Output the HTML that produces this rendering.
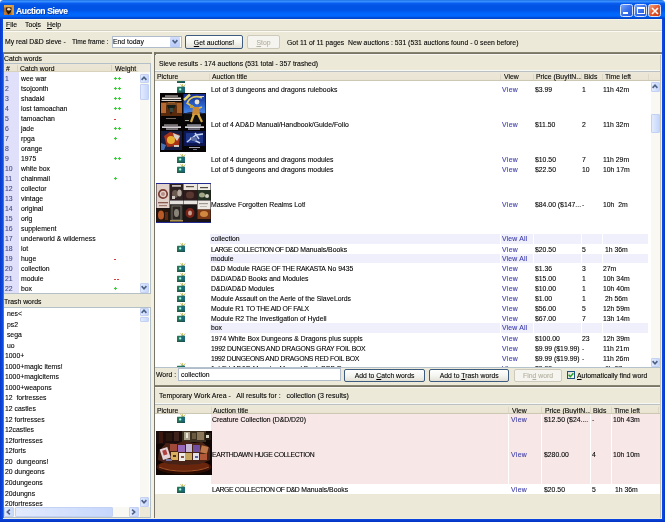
<!DOCTYPE html><html><head><meta charset="utf-8"><style>
*{box-sizing:border-box;margin:0;padding:0}
html,body{width:665px;height:522px;overflow:hidden;background:#fafafa}
body{font-family:"Liberation Sans",sans-serif;font-size:6.85px;line-height:10px;color:#000;position:relative}
.a{position:absolute}
.t{position:absolute;white-space:pre;line-height:10px;will-change:transform;-webkit-text-stroke:0.1px currentColor}
.tb{position:absolute;width:13px;height:13px;top:4px;border:1px solid #d8e4fa;border-radius:2.5px;background:linear-gradient(135deg,#77a7fb,#3a70ec 50%,#2157dc)}
.tbx{background:linear-gradient(135deg,#f3a583,#e2582f 50%,#c73f16)}
.sbb{position:absolute;border:1px solid #c3d1f5;border-radius:1px;background:linear-gradient(90deg,#e3ebfd,#c6d6fc)}
.vw{color:#3b3ba8}
</style></head><body><div class="a" style="left:0px;top:5px;width:665px;height:517px;background:#0b3fd4"></div>
<div class="a" style="left:0px;top:5px;width:3px;height:517px;background:linear-gradient(90deg,#0a37c8,#0b4fe6)"></div>
<div class="a" style="left:662px;top:5px;width:3px;height:517px;background:linear-gradient(90deg,#0b4fe6,#0a37c8)"></div>
<div class="a" style="left:0px;top:0px;width:665px;height:19px;background:linear-gradient(#1c6ee2 0px,#3a92ff 1.3px,#2a84fa 2px,#0a5cf0 3.5px,#0052e2 6px,#0054e6 10px,#0064fa 13px,#0068ff 16px,#0050dc 17.5px,#0040c8 19px);border-radius:3.5px 3.5px 0 0"></div>
<svg class="a" style="left:4px;top:5px" width="10" height="10" viewBox="0 0 10 10"><defs><filter id="bi"><feGaussianBlur stdDeviation="0.45"/></filter></defs><rect width="10" height="10" fill="#a86a2a"/><g filter="url(#bi)"><rect x="0" y="0" width="10" height="2.5" fill="#e0a850"/><rect x="7.5" y="0" width="2.5" height="10" fill="#d89840"/><path d="M2 2.5L7.5 2.5L7 7L4.5 9.5L2.5 7Z" fill="#24140a"/><ellipse cx="4.8" cy="4.2" rx="1.8" ry="1.3" fill="#f0e0c0"/><rect x="0" y="7" width="2.5" height="3" fill="#c07830"/></g></svg>
<div class="t" style="left:16px;top:5.60px;font-size:8.6px;letter-spacing:-0.4px;font-weight:bold;color:#fff;text-shadow:0.7px 0.7px 0 #0a3aa8">Auction Sieve</div>
<div class="tb" style="left:620px"><div class="a" style="left:2px;top:6.5px;width:4.5px;height:2px;background:#fff"></div></div>
<div class="tb" style="left:634px"><div class="a" style="left:2px;top:2px;width:8px;height:7px;border:1px solid #fff;border-top-width:2px"></div></div>
<div class="tb tbx" style="left:648px"><svg class="a" style="left:2px;top:2px" width="8" height="8"><path d="M1 1L7 7M7 1L1 7" stroke="#fff" stroke-width="1.6"/></svg></div>
<div class="a" style="left:3px;top:19px;width:659px;height:499px;background:#ece9d8"></div>
<div class="a" style="left:3px;top:19px;width:659px;height:1px;background:#f8f5e6"></div>
<div class="t" style="left:6px;top:19.60px;"><u>F</u>ile</div>
<div class="t" style="left:24.5px;top:19.60px;">Too<u>l</u>s</div>
<div class="t" style="left:47px;top:19.60px;"><u>H</u>elp</div>
<div class="a" style="left:3px;top:30px;width:659px;height:1px;background:#d3cfbf"></div>
<div class="a" style="left:3px;top:31px;width:659px;height:1px;background:#fbfaf5"></div>
<div class="t" style="left:5.4px;top:37.30px;">My real D&amp;D sieve -</div>
<div class="t" style="left:72px;top:37.30px;font-size:6.55px">Time frame :</div>
<div class="a" style="left:111.5px;top:36px;width:70px;height:12px;background:#fff;border:1px solid #b0bccb"></div>
<div class="t" style="left:113px;top:37.30px;">End today</div>
<div class="a" style="left:170px;top:37px;width:10px;height:10px;background:linear-gradient(#d2defc,#b8cbf8);border-radius:1px"></div>
<svg class="a" style="left:172px;top:39px" width="6" height="5"><path d="M0.6 1.1L3 3.7L5.4 1.1" stroke="#4d6185" stroke-width="1.6" fill="none"/></svg>
<div class="a" style="left:185px;top:35px;width:58px;height:14px;border:1px solid #3d5c80;border-radius:2px;background:linear-gradient(#fff,#f4f4f0 55%,#e3e0d6)"></div>
<div class="t" style="left:185px;top:38.00px;width:58px;text-align:center"><u>G</u>et auctions!</div>
<div class="a" style="left:247px;top:35px;width:33px;height:14px;border:1px solid #cdcabb;border-radius:2px;background:#f5f4ee"></div>
<div class="t" style="left:247px;top:38.00px;width:33px;text-align:center;color:#b3b0a0"><u>S</u>top</div>
<div class="t" style="left:287px;top:38.00px;">Got 11 of 11 pages&nbsp; New auctions : 531 (531 auctions found - 0 seen before)</div>
<div class="a" style="left:3px;top:52px;width:149px;height:2px;background:linear-gradient(#8c8978,#736f60)"></div>
<div class="a" style="left:154px;top:52px;width:508px;height:2px;background:linear-gradient(#8c8978,#736f60)"></div>
<div class="a" style="left:3px;top:54px;width:148px;height:1px;background:#f7f6f0"></div>
<div class="a" style="left:156px;top:54px;width:505px;height:1px;background:#f7f6f0"></div>
<div class="t" style="left:4px;top:53.60px;">Catch words</div>
<div class="a" style="left:3px;top:63px;width:148px;height:231px;background:#fff;border:1px solid #b4c0c8"></div>
<div class="a" style="left:4px;top:64px;width:146px;height:8px;background:#ece9dc"></div>
<div class="a" style="left:4px;top:64px;width:134px;height:8px;background:linear-gradient(#ebe6d6,#e9e3d0);border-bottom:1px solid #d8d2bd"></div>
<div class="t" style="left:5.7px;top:64.10px;">#</div>
<div class="t" style="left:20px;top:64.10px;">Catch word</div>
<div class="t" style="left:115px;top:64.10px;">Weight</div>
<div class="a" style="left:17px;top:65px;width:1px;height:6px;background:#d6d0bd"></div>
<div class="a" style="left:111px;top:65px;width:1px;height:6px;background:#d6d0bd"></div>
<div class="a" style="left:4px;top:72px;width:15px;height:221px;background:#e0e0fb"></div>
<div class="t" style="left:5px;top:74.00px;color:#404a88">1</div>
<div class="t" style="left:21.3px;top:74.00px;">wee war</div>
<svg class="a" style="left:113.5px;top:77.2px" width="3" height="3"><path d="M0 1.5H3M1.5 0V3" stroke="#3cd03c" stroke-width="1.2"/></svg>
<svg class="a" style="left:117.5px;top:77.2px" width="3" height="3"><path d="M0 1.5H3M1.5 0V3" stroke="#3cd03c" stroke-width="1.2"/></svg>
<div class="t" style="left:5px;top:84.00px;color:#404a88">2</div>
<div class="t" style="left:21.3px;top:84.00px;">tsojconth</div>
<svg class="a" style="left:113.5px;top:87.2px" width="3" height="3"><path d="M0 1.5H3M1.5 0V3" stroke="#3cd03c" stroke-width="1.2"/></svg>
<svg class="a" style="left:117.5px;top:87.2px" width="3" height="3"><path d="M0 1.5H3M1.5 0V3" stroke="#3cd03c" stroke-width="1.2"/></svg>
<div class="t" style="left:5px;top:94.00px;color:#404a88">3</div>
<div class="t" style="left:21.3px;top:94.00px;">shadaki</div>
<svg class="a" style="left:113.5px;top:97.2px" width="3" height="3"><path d="M0 1.5H3M1.5 0V3" stroke="#3cd03c" stroke-width="1.2"/></svg>
<svg class="a" style="left:117.5px;top:97.2px" width="3" height="3"><path d="M0 1.5H3M1.5 0V3" stroke="#3cd03c" stroke-width="1.2"/></svg>
<div class="t" style="left:5px;top:104.00px;color:#404a88">4</div>
<div class="t" style="left:21.3px;top:104.00px;">lost tamoachan</div>
<svg class="a" style="left:113.5px;top:107.2px" width="3" height="3"><path d="M0 1.5H3M1.5 0V3" stroke="#3cd03c" stroke-width="1.2"/></svg>
<svg class="a" style="left:117.5px;top:107.2px" width="3" height="3"><path d="M0 1.5H3M1.5 0V3" stroke="#3cd03c" stroke-width="1.2"/></svg>
<div class="t" style="left:5px;top:114.00px;color:#404a88">5</div>
<div class="t" style="left:21.3px;top:114.00px;">tamoachan</div>
<div class="a" style="left:113.8px;top:118.60000000000001px;width:2.4px;height:1px;background:#d83a3a"></div>
<div class="t" style="left:5px;top:124.00px;color:#404a88">6</div>
<div class="t" style="left:21.3px;top:124.00px;">jade</div>
<svg class="a" style="left:113.5px;top:127.2px" width="3" height="3"><path d="M0 1.5H3M1.5 0V3" stroke="#3cd03c" stroke-width="1.2"/></svg>
<svg class="a" style="left:117.5px;top:127.2px" width="3" height="3"><path d="M0 1.5H3M1.5 0V3" stroke="#3cd03c" stroke-width="1.2"/></svg>
<div class="t" style="left:5px;top:134.00px;color:#404a88">7</div>
<div class="t" style="left:21.3px;top:134.00px;">rpga</div>
<svg class="a" style="left:113.5px;top:137.20000000000002px" width="3" height="3"><path d="M0 1.5H3M1.5 0V3" stroke="#3cd03c" stroke-width="1.2"/></svg>
<div class="t" style="left:5px;top:144.00px;color:#404a88">8</div>
<div class="t" style="left:21.3px;top:144.00px;">orange</div>
<div class="t" style="left:5px;top:154.00px;color:#404a88">9</div>
<div class="t" style="left:21.3px;top:154.00px;">1975</div>
<svg class="a" style="left:113.5px;top:157.20000000000002px" width="3" height="3"><path d="M0 1.5H3M1.5 0V3" stroke="#3cd03c" stroke-width="1.2"/></svg>
<svg class="a" style="left:117.5px;top:157.20000000000002px" width="3" height="3"><path d="M0 1.5H3M1.5 0V3" stroke="#3cd03c" stroke-width="1.2"/></svg>
<div class="t" style="left:5px;top:164.00px;color:#404a88">10</div>
<div class="t" style="left:21.3px;top:164.00px;">white box</div>
<div class="t" style="left:5px;top:174.00px;color:#404a88">11</div>
<div class="t" style="left:21.3px;top:174.00px;">chainmail</div>
<svg class="a" style="left:113.5px;top:177.20000000000002px" width="3" height="3"><path d="M0 1.5H3M1.5 0V3" stroke="#3cd03c" stroke-width="1.2"/></svg>
<div class="t" style="left:5px;top:184.00px;color:#404a88">12</div>
<div class="t" style="left:21.3px;top:184.00px;">collector</div>
<div class="t" style="left:5px;top:194.00px;color:#404a88">13</div>
<div class="t" style="left:21.3px;top:194.00px;">vintage</div>
<div class="t" style="left:5px;top:204.00px;color:#404a88">14</div>
<div class="t" style="left:21.3px;top:204.00px;">original</div>
<div class="t" style="left:5px;top:214.00px;color:#404a88">15</div>
<div class="t" style="left:21.3px;top:214.00px;">orig</div>
<div class="t" style="left:5px;top:224.00px;color:#404a88">16</div>
<div class="t" style="left:21.3px;top:224.00px;">supplement</div>
<div class="t" style="left:5px;top:234.00px;color:#404a88">17</div>
<div class="t" style="left:21.3px;top:234.00px;">underworld &amp; wilderness</div>
<div class="t" style="left:5px;top:244.00px;color:#404a88">18</div>
<div class="t" style="left:21.3px;top:244.00px;">lot</div>
<div class="t" style="left:5px;top:254.00px;color:#404a88">19</div>
<div class="t" style="left:21.3px;top:254.00px;">huge</div>
<div class="a" style="left:113.8px;top:258.59999999999997px;width:2.4px;height:1px;background:#d83a3a"></div>
<div class="t" style="left:5px;top:264.00px;color:#404a88">20</div>
<div class="t" style="left:21.3px;top:264.00px;">collection</div>
<div class="t" style="left:5px;top:274.00px;color:#404a88">21</div>
<div class="t" style="left:21.3px;top:274.00px;">module</div>
<div class="a" style="left:113.8px;top:278.59999999999997px;width:2.4px;height:1px;background:#d83a3a"></div>
<div class="a" style="left:116.8px;top:278.59999999999997px;width:2.4px;height:1px;background:#d83a3a"></div>
<div class="t" style="left:5px;top:284.00px;color:#404a88">22</div>
<div class="t" style="left:21.3px;top:284.00px;">box</div>
<svg class="a" style="left:113.5px;top:287.2px" width="3" height="3"><path d="M0 1.5H3M1.5 0V3" stroke="#3cd03c" stroke-width="1.2"/></svg>
<div class="a" style="left:139.5px;top:72px;width:9px;height:221px;background:#f9f8f3"></div>
<div class="sbb" style="left:139.5px;top:73.5px;width:9px;height:9px"></div>
<svg class="a" style="left:140.5px;top:75.5px" width="6" height="5"><path d="M0.6 3.9L3 1.3L5.4 3.9" stroke="#4d6185" stroke-width="1.6" fill="none"/></svg>
<div class="sbb" style="left:139.5px;top:84px;width:9px;height:16px"></div>
<div class="sbb" style="left:139.5px;top:283px;width:9px;height:10px"></div>
<svg class="a" style="left:140.5px;top:285px" width="6" height="5"><path d="M0.6 1.1L3 3.7L5.4 1.1" stroke="#4d6185" stroke-width="1.6" fill="none"/></svg>
<div class="t" style="left:4px;top:297.40px;">Trash words</div>
<div class="a" style="left:3px;top:306.5px;width:148px;height:211.5px;background:#fff;border:1px solid #b4c0c8"></div>
<div class="a" style="left:4px;top:308px;width:135px;height:199px;overflow:hidden">
<div class="t" style="left:0.5px;top:1.00px"> nes&lt;</div>
<div class="t" style="left:0.5px;top:11.56px"> ps2</div>
<div class="t" style="left:0.5px;top:22.12px"> sega</div>
<div class="t" style="left:0.5px;top:32.68px"> uo</div>
<div class="t" style="left:0.5px;top:43.24px">1000+</div>
<div class="t" style="left:0.5px;top:53.80px">1000+magic items!</div>
<div class="t" style="left:0.5px;top:64.36px">1000+magicitems</div>
<div class="t" style="left:0.5px;top:74.92px">1000+weapons</div>
<div class="t" style="left:0.5px;top:85.48px">12&nbsp; fortresses</div>
<div class="t" style="left:0.5px;top:96.04px">12 castles</div>
<div class="t" style="left:0.5px;top:106.60px">12 fortresses</div>
<div class="t" style="left:0.5px;top:117.16px">12castles</div>
<div class="t" style="left:0.5px;top:127.72px">12fortresses</div>
<div class="t" style="left:0.5px;top:138.28px">12forts</div>
<div class="t" style="left:0.5px;top:148.84px">20&nbsp; dungeons!</div>
<div class="t" style="left:0.5px;top:159.40px">20 dungeons</div>
<div class="t" style="left:0.5px;top:169.96px">20dungeons</div>
<div class="t" style="left:0.5px;top:180.52px">20dungns</div>
<div class="t" style="left:0.5px;top:191.08px">20fortresses</div>
</div>
<div class="a" style="left:139.5px;top:308px;width:9px;height:199px;background:#f9f8f3"></div>
<div class="sbb" style="left:139.5px;top:307.5px;width:9px;height:8.8px"></div>
<svg class="a" style="left:140.5px;top:308.5px" width="6" height="5"><path d="M0.6 3.9L3 1.3L5.4 3.9" stroke="#4d6185" stroke-width="1.6" fill="none"/></svg>
<div class="sbb" style="left:139.5px;top:317.2px;width:9px;height:5px"></div>
<div class="sbb" style="left:139.5px;top:497px;width:9px;height:10px"></div>
<svg class="a" style="left:140.5px;top:499px" width="6" height="5"><path d="M0.6 1.1L3 3.7L5.4 1.1" stroke="#4d6185" stroke-width="1.6" fill="none"/></svg>
<div class="a" style="left:4px;top:507px;width:144.5px;height:10px;background:#f9f8f3"></div>
<div class="sbb" style="left:4px;top:507px;width:10px;height:10px"></div>
<svg class="a" style="left:6px;top:509px" width="5" height="6"><path d="M3.9 0.6L1.3 3L3.9 5.4" stroke="#4d6185" stroke-width="1.6" fill="none"/></svg>
<div class="sbb" style="left:15px;top:507px;width:98px;height:10px"></div>
<div class="sbb" style="left:129px;top:507px;width:10px;height:10px"></div>
<svg class="a" style="left:131px;top:509px" width="5" height="6"><path d="M1.1 0.6L3.7 3L1.1 5.4" stroke="#4d6185" stroke-width="1.6" fill="none"/></svg>
<div class="a" style="left:139.5px;top:507px;width:10.5px;height:10px;background:#ece9d8"></div>
<div class="a" style="left:3px;top:53px;width:1px;height:465px;background:#74726a"></div>
<div class="a" style="left:151px;top:54px;width:3px;height:464px;background:#f3f1e4"></div>
<div class="a" style="left:154px;top:52px;width:1.5px;height:466px;background:#77756a"></div>
<div class="a" style="left:155.5px;top:54px;width:1px;height:464px;background:#f6f4ec"></div>
<div class="a" style="left:155px;top:55px;width:507px;height:463px;background:#ece9d8"></div>
<div class="t" style="left:159px;top:58.80px;">Sieve results - 174 auctions (531 total - 357 trashed)</div>
<div class="a" style="left:155px;top:72px;width:506px;height:296px;background:#fff"></div>
<div class="a" style="left:155px;top:70px;width:506px;height:1px;background:#f6f8f4"></div>
<div class="a" style="left:155px;top:71px;width:506px;height:1px;background:#b9c1c3"></div>
<div class="a" style="left:155px;top:72px;width:506px;height:9px;background:linear-gradient(#ece8d9,#e9e4d2);border-bottom:1px solid #cdc8b4"></div>
<div class="t" style="left:157px;top:72.10px;">Picture</div>
<div class="a" style="left:208.5px;top:74px;width:1px;height:6px;background:#dcd7c6"></div>
<div class="t" style="left:212px;top:72.10px;">Auction title</div>
<div class="a" style="left:500px;top:74px;width:1px;height:6px;background:#dcd7c6"></div>
<div class="t" style="left:503.5px;top:72.10px;">View</div>
<div class="a" style="left:533px;top:74px;width:1px;height:6px;background:#dcd7c6"></div>
<div class="t" style="left:535.7px;top:72.10px;">Price (BuyItN...</div>
<div class="a" style="left:581px;top:74px;width:1px;height:6px;background:#dcd7c6"></div>
<div class="t" style="left:584px;top:72.10px;">Bids</div>
<div class="a" style="left:602px;top:74px;width:1px;height:6px;background:#dcd7c6"></div>
<div class="t" style="left:605px;top:72.10px;">Time left</div>
<div class="a" style="left:648px;top:74px;width:1px;height:6px;background:#dcd7c6"></div>
<div class="t" style="left:650px;top:72.10px;"></div>
<div class="a" style="left:155px;top:81px;width:495px;height:285.6px;overflow:hidden">
<svg class="a" style="left:22px;top:-6.95px" width="9" height="10" viewBox="0 0 9 10"><path d="M5.5 3.2L3.6 0.2M5.5 3.2L5.6 0M5.5 3.2L8.4 0.6" stroke="#c4bc60" stroke-width="0.9" fill="none"/><rect x="0" y="2.8" width="8" height="6" rx="0.5" fill="#23785a"/><rect x="4.5" y="2.8" width="3.5" height="6" fill="#206a78"/><rect x="0" y="7.8" width="8" height="1" fill="#184a44"/><circle cx="3.2" cy="5.4" r="1.15" fill="#b0f8f8"/></svg>
<svg class="a" style="left:22px;top:3.00px" width="9" height="10" viewBox="0 0 9 10"><path d="M5.5 3.2L3.6 0.2M5.5 3.2L5.6 0M5.5 3.2L8.4 0.6" stroke="#c4bc60" stroke-width="0.9" fill="none"/><rect x="0" y="2.8" width="8" height="6" rx="0.5" fill="#23785a"/><rect x="4.5" y="2.8" width="3.5" height="6" fill="#206a78"/><rect x="0" y="7.8" width="8" height="1" fill="#184a44"/><circle cx="3.2" cy="5.4" r="1.15" fill="#b0f8f8"/></svg>
<div class="t" style="left:55.50px;top:4.30px;">Lot of 3 dungeons and dragons rulebooks</div>
<div class="t" style="left:347.30px;top:4.30px;color:#3b3ba8;letter-spacing:0.35px">View</div>
<div class="t" style="left:380.00px;top:4.30px;">$3.99</div>
<div class="t" style="left:427.40px;top:4.30px;">1</div>
<div class="t" style="left:448.40px;top:4.30px;">11h 42m</div>
<div class="t" style="left:55.50px;top:39.12px;">Lot of 4 AD&amp;D Manual/Handbook/Guide/Folio</div>
<div class="t" style="left:347.30px;top:39.12px;color:#3b3ba8;letter-spacing:0.35px">View</div>
<div class="t" style="left:380.00px;top:39.12px;">$11.50</div>
<div class="t" style="left:427.40px;top:39.12px;">2</div>
<div class="t" style="left:448.40px;top:39.12px;">11h 32m</div>
<svg class="a" style="left:22px;top:72.65px" width="9" height="10" viewBox="0 0 9 10"><path d="M5.5 3.2L3.6 0.2M5.5 3.2L5.6 0M5.5 3.2L8.4 0.6" stroke="#c4bc60" stroke-width="0.9" fill="none"/><rect x="0" y="2.8" width="8" height="6" rx="0.5" fill="#23785a"/><rect x="4.5" y="2.8" width="3.5" height="6" fill="#206a78"/><rect x="0" y="7.8" width="8" height="1" fill="#184a44"/><circle cx="3.2" cy="5.4" r="1.15" fill="#b0f8f8"/></svg>
<div class="t" style="left:55.50px;top:73.95px;">Lot of 4 dungeons and dragons modules</div>
<div class="t" style="left:347.30px;top:73.95px;color:#3b3ba8;letter-spacing:0.35px">View</div>
<div class="t" style="left:380.00px;top:73.95px;">$10.50</div>
<div class="t" style="left:427.40px;top:73.95px;">7</div>
<div class="t" style="left:448.40px;top:73.95px;">11h 29m</div>
<svg class="a" style="left:22px;top:82.60px" width="9" height="10" viewBox="0 0 9 10"><path d="M5.5 3.2L3.6 0.2M5.5 3.2L5.6 0M5.5 3.2L8.4 0.6" stroke="#c4bc60" stroke-width="0.9" fill="none"/><rect x="0" y="2.8" width="8" height="6" rx="0.5" fill="#23785a"/><rect x="4.5" y="2.8" width="3.5" height="6" fill="#206a78"/><rect x="0" y="7.8" width="8" height="1" fill="#184a44"/><circle cx="3.2" cy="5.4" r="1.15" fill="#b0f8f8"/></svg>
<div class="t" style="left:55.50px;top:83.90px;">Lot of 5 dungeons and dragons modules</div>
<div class="t" style="left:347.30px;top:83.90px;color:#3b3ba8;letter-spacing:0.35px">View</div>
<div class="t" style="left:380.00px;top:83.90px;">$22.50</div>
<div class="t" style="left:427.40px;top:83.90px;">10</div>
<div class="t" style="left:448.40px;top:83.90px;">10h 17m</div>
<div class="t" style="left:55.50px;top:118.72px;">Massive Forgotten Realms Lot!</div>
<div class="t" style="left:347.30px;top:118.72px;color:#3b3ba8;letter-spacing:0.35px">View</div>
<div class="t" style="left:380.00px;top:118.72px;">$84.00 ($147...</div>
<div class="t" style="left:427.40px;top:118.72px;">-</div>
<div class="t" style="left:448.40px;top:118.72px;">10h&nbsp; 2m</div>
<div class="a" style="left:55px;top:152.65px;width:438px;height:9.95px;background:#f0f0fd"></div>
<div class="a" style="left:345px;top:152.65px;width:1px;height:9.95px;background:#fff"></div>
<div class="a" style="left:378px;top:152.65px;width:1px;height:9.95px;background:#fff"></div>
<div class="a" style="left:426px;top:152.65px;width:1px;height:9.95px;background:#fff"></div>
<div class="a" style="left:447px;top:152.65px;width:1px;height:9.95px;background:#fff"></div>
<div class="t" style="left:56.00px;top:152.85px;">collection</div>
<div class="t" style="left:347.30px;top:152.85px;color:#3b3ba8;letter-spacing:0.2px">View All</div>
<svg class="a" style="left:22px;top:162.20px" width="9" height="10" viewBox="0 0 9 10"><path d="M5.5 3.2L3.6 0.2M5.5 3.2L5.6 0M5.5 3.2L8.4 0.6" stroke="#c4bc60" stroke-width="0.9" fill="none"/><rect x="0" y="2.8" width="8" height="6" rx="0.5" fill="#23785a"/><rect x="4.5" y="2.8" width="3.5" height="6" fill="#206a78"/><rect x="0" y="7.8" width="8" height="1" fill="#184a44"/><circle cx="3.2" cy="5.4" r="1.15" fill="#b0f8f8"/></svg>
<div class="t" style="left:55.50px;top:163.50px;"><span style="letter-spacing:-0.4px">LARGE COLLECTION OF D&amp;D</span> Manuals/Books</div>
<div class="t" style="left:347.30px;top:163.50px;color:#3b3ba8;letter-spacing:0.35px">View</div>
<div class="t" style="left:380.00px;top:163.50px;">$20.50</div>
<div class="t" style="left:427.40px;top:163.50px;">5</div>
<div class="t" style="left:448.40px;top:163.50px;">&nbsp;1h 36m</div>
<div class="a" style="left:55px;top:172.55px;width:438px;height:9.95px;background:#f0f0fd"></div>
<div class="a" style="left:345px;top:172.55px;width:1px;height:9.95px;background:#fff"></div>
<div class="a" style="left:378px;top:172.55px;width:1px;height:9.95px;background:#fff"></div>
<div class="a" style="left:426px;top:172.55px;width:1px;height:9.95px;background:#fff"></div>
<div class="a" style="left:447px;top:172.55px;width:1px;height:9.95px;background:#fff"></div>
<div class="t" style="left:56.00px;top:172.75px;">module</div>
<div class="t" style="left:347.30px;top:172.75px;color:#3b3ba8;letter-spacing:0.2px">View All</div>
<svg class="a" style="left:22px;top:182.10px" width="9" height="10" viewBox="0 0 9 10"><path d="M5.5 3.2L3.6 0.2M5.5 3.2L5.6 0M5.5 3.2L8.4 0.6" stroke="#c4bc60" stroke-width="0.9" fill="none"/><rect x="0" y="2.8" width="8" height="6" rx="0.5" fill="#23785a"/><rect x="4.5" y="2.8" width="3.5" height="6" fill="#206a78"/><rect x="0" y="7.8" width="8" height="1" fill="#184a44"/><circle cx="3.2" cy="5.4" r="1.15" fill="#b0f8f8"/></svg>
<div class="t" style="left:55.50px;top:183.40px;">D&amp;D Module <span style="letter-spacing:-0.3px">RAGE OF THE RAKASTA</span> No 9435</div>
<div class="t" style="left:347.30px;top:183.40px;color:#3b3ba8;letter-spacing:0.35px">View</div>
<div class="t" style="left:380.00px;top:183.40px;">$1.36</div>
<div class="t" style="left:427.40px;top:183.40px;">3</div>
<div class="t" style="left:448.40px;top:183.40px;">27m</div>
<svg class="a" style="left:22px;top:192.05px" width="9" height="10" viewBox="0 0 9 10"><path d="M5.5 3.2L3.6 0.2M5.5 3.2L5.6 0M5.5 3.2L8.4 0.6" stroke="#c4bc60" stroke-width="0.9" fill="none"/><rect x="0" y="2.8" width="8" height="6" rx="0.5" fill="#23785a"/><rect x="4.5" y="2.8" width="3.5" height="6" fill="#206a78"/><rect x="0" y="7.8" width="8" height="1" fill="#184a44"/><circle cx="3.2" cy="5.4" r="1.15" fill="#b0f8f8"/></svg>
<div class="t" style="left:55.50px;top:193.35px;">D&amp;D/AD&amp;D Books and Modules</div>
<div class="t" style="left:347.30px;top:193.35px;color:#3b3ba8;letter-spacing:0.35px">View</div>
<div class="t" style="left:380.00px;top:193.35px;">$15.00</div>
<div class="t" style="left:427.40px;top:193.35px;">1</div>
<div class="t" style="left:448.40px;top:193.35px;">10h 34m</div>
<svg class="a" style="left:22px;top:202.00px" width="9" height="10" viewBox="0 0 9 10"><path d="M5.5 3.2L3.6 0.2M5.5 3.2L5.6 0M5.5 3.2L8.4 0.6" stroke="#c4bc60" stroke-width="0.9" fill="none"/><rect x="0" y="2.8" width="8" height="6" rx="0.5" fill="#23785a"/><rect x="4.5" y="2.8" width="3.5" height="6" fill="#206a78"/><rect x="0" y="7.8" width="8" height="1" fill="#184a44"/><circle cx="3.2" cy="5.4" r="1.15" fill="#b0f8f8"/></svg>
<div class="t" style="left:55.50px;top:203.30px;">D&amp;D/AD&amp;D Modules</div>
<div class="t" style="left:347.30px;top:203.30px;color:#3b3ba8;letter-spacing:0.35px">View</div>
<div class="t" style="left:380.00px;top:203.30px;">$10.00</div>
<div class="t" style="left:427.40px;top:203.30px;">1</div>
<div class="t" style="left:448.40px;top:203.30px;">10h 40m</div>
<svg class="a" style="left:22px;top:211.95px" width="9" height="10" viewBox="0 0 9 10"><path d="M5.5 3.2L3.6 0.2M5.5 3.2L5.6 0M5.5 3.2L8.4 0.6" stroke="#c4bc60" stroke-width="0.9" fill="none"/><rect x="0" y="2.8" width="8" height="6" rx="0.5" fill="#23785a"/><rect x="4.5" y="2.8" width="3.5" height="6" fill="#206a78"/><rect x="0" y="7.8" width="8" height="1" fill="#184a44"/><circle cx="3.2" cy="5.4" r="1.15" fill="#b0f8f8"/></svg>
<div class="t" style="left:55.50px;top:213.25px;">Module Assault on the Aerie of the SlaveLords</div>
<div class="t" style="left:347.30px;top:213.25px;color:#3b3ba8;letter-spacing:0.35px">View</div>
<div class="t" style="left:380.00px;top:213.25px;">$1.00</div>
<div class="t" style="left:427.40px;top:213.25px;">1</div>
<div class="t" style="left:448.40px;top:213.25px;">&nbsp;2h 56m</div>
<svg class="a" style="left:22px;top:221.90px" width="9" height="10" viewBox="0 0 9 10"><path d="M5.5 3.2L3.6 0.2M5.5 3.2L5.6 0M5.5 3.2L8.4 0.6" stroke="#c4bc60" stroke-width="0.9" fill="none"/><rect x="0" y="2.8" width="8" height="6" rx="0.5" fill="#23785a"/><rect x="4.5" y="2.8" width="3.5" height="6" fill="#206a78"/><rect x="0" y="7.8" width="8" height="1" fill="#184a44"/><circle cx="3.2" cy="5.4" r="1.15" fill="#b0f8f8"/></svg>
<div class="t" style="left:55.50px;top:223.20px;">Module R1 <span style="letter-spacing:-0.28px">TO THE AID OF FALX</span></div>
<div class="t" style="left:347.30px;top:223.20px;color:#3b3ba8;letter-spacing:0.35px">View</div>
<div class="t" style="left:380.00px;top:223.20px;">$56.00</div>
<div class="t" style="left:427.40px;top:223.20px;">5</div>
<div class="t" style="left:448.40px;top:223.20px;">12h 59m</div>
<svg class="a" style="left:22px;top:231.85px" width="9" height="10" viewBox="0 0 9 10"><path d="M5.5 3.2L3.6 0.2M5.5 3.2L5.6 0M5.5 3.2L8.4 0.6" stroke="#c4bc60" stroke-width="0.9" fill="none"/><rect x="0" y="2.8" width="8" height="6" rx="0.5" fill="#23785a"/><rect x="4.5" y="2.8" width="3.5" height="6" fill="#206a78"/><rect x="0" y="7.8" width="8" height="1" fill="#184a44"/><circle cx="3.2" cy="5.4" r="1.15" fill="#b0f8f8"/></svg>
<div class="t" style="left:55.50px;top:233.15px;">Module R2 The Investigation of Hydell</div>
<div class="t" style="left:347.30px;top:233.15px;color:#3b3ba8;letter-spacing:0.35px">View</div>
<div class="t" style="left:380.00px;top:233.15px;">$67.00</div>
<div class="t" style="left:427.40px;top:233.15px;">7</div>
<div class="t" style="left:448.40px;top:233.15px;">13h 14m</div>
<div class="a" style="left:55px;top:242.20px;width:438px;height:9.95px;background:#f0f0fd"></div>
<div class="a" style="left:345px;top:242.20px;width:1px;height:9.95px;background:#fff"></div>
<div class="a" style="left:378px;top:242.20px;width:1px;height:9.95px;background:#fff"></div>
<div class="a" style="left:426px;top:242.20px;width:1px;height:9.95px;background:#fff"></div>
<div class="a" style="left:447px;top:242.20px;width:1px;height:9.95px;background:#fff"></div>
<div class="t" style="left:56.00px;top:242.40px;">box</div>
<div class="t" style="left:347.30px;top:242.40px;color:#3b3ba8;letter-spacing:0.2px">View All</div>
<svg class="a" style="left:22px;top:251.75px" width="9" height="10" viewBox="0 0 9 10"><path d="M5.5 3.2L3.6 0.2M5.5 3.2L5.6 0M5.5 3.2L8.4 0.6" stroke="#c4bc60" stroke-width="0.9" fill="none"/><rect x="0" y="2.8" width="8" height="6" rx="0.5" fill="#23785a"/><rect x="4.5" y="2.8" width="3.5" height="6" fill="#206a78"/><rect x="0" y="7.8" width="8" height="1" fill="#184a44"/><circle cx="3.2" cy="5.4" r="1.15" fill="#b0f8f8"/></svg>
<div class="t" style="left:55.50px;top:253.05px;">1974 White Box Dungeons &amp; Dragons plus suppls</div>
<div class="t" style="left:347.30px;top:253.05px;color:#3b3ba8;letter-spacing:0.35px">View</div>
<div class="t" style="left:380.00px;top:253.05px;">$100.00</div>
<div class="t" style="left:427.40px;top:253.05px;">23</div>
<div class="t" style="left:448.40px;top:253.05px;">12h 39m</div>
<div class="t" style="left:55.50px;top:263.00px;"><span style="letter-spacing:-0.22px">1992 DUNGEONS AND DRAGONS GRAY FOIL BOX</span></div>
<div class="t" style="left:347.30px;top:263.00px;color:#3b3ba8;letter-spacing:0.35px">View</div>
<div class="t" style="left:380.00px;top:263.00px;">$9.99 ($19.99)</div>
<div class="t" style="left:427.40px;top:263.00px;">-</div>
<div class="t" style="left:448.40px;top:263.00px;">11h 21m</div>
<div class="t" style="left:55.50px;top:272.95px;"><span style="letter-spacing:-0.28px">1992 DUNGEONS AND DRAGONS RED FOIL BOX</span></div>
<div class="t" style="left:347.30px;top:272.95px;color:#3b3ba8;letter-spacing:0.35px">View</div>
<div class="t" style="left:380.00px;top:272.95px;">$9.99 ($19.99)</div>
<div class="t" style="left:427.40px;top:272.95px;">-</div>
<div class="t" style="left:448.40px;top:272.95px;">11h 26m</div>
<svg class="a" style="left:22px;top:281.60px" width="9" height="10" viewBox="0 0 9 10"><path d="M5.5 3.2L3.6 0.2M5.5 3.2L5.6 0M5.5 3.2L8.4 0.6" stroke="#c4bc60" stroke-width="0.9" fill="none"/><rect x="0" y="2.8" width="8" height="6" rx="0.5" fill="#23785a"/><rect x="4.5" y="2.8" width="3.5" height="6" fill="#206a78"/><rect x="0" y="7.8" width="8" height="1" fill="#184a44"/><circle cx="3.2" cy="5.4" r="1.15" fill="#b0f8f8"/></svg>
<div class="t" style="left:55.50px;top:282.90px;">1st Ed AD&amp;D Monster Manual Book BBB Dungeons</div>
<div class="t" style="left:347.30px;top:282.90px;color:#3b3ba8;letter-spacing:0.35px">View</div>
<div class="t" style="left:380.00px;top:282.90px;">$9.99</div>
<div class="t" style="left:427.40px;top:282.90px;">-</div>
<div class="t" style="left:448.40px;top:282.90px;">&nbsp;6h 07m</div>
</div>
<svg class="a" style="left:160px;top:93px" width="46" height="59" viewBox="0 0 46 59"><defs><filter id="bl1" x="-5%" y="-5%" width="110%" height="110%"><feGaussianBlur stdDeviation="0.7"/></filter></defs><rect width="46" height="59" fill="#060404"/><g filter="url(#bl1)"><rect x="5" y="2.5" width="13" height="1.1" fill="#d0c8c0"/><rect x="2" y="4.5" width="19" height="1.5" fill="#f0e8e0"/><rect x="1.5" y="6.8" width="20" height="1.2" fill="#d8d0c8"/><rect x="1" y="9" width="21" height="14" fill="#5a2a10"/><rect x="1" y="10" width="5" height="10" fill="#b86a30"/><rect x="17" y="10" width="5" height="10" fill="#a86028"/><rect x="8" y="9" width="7" height="2" fill="#c88040"/><rect x="6" y="9.5" width="11" height="3" fill="#7a4a22"/><path d="M7 12L11 22L16 12Z" fill="#141a14"/><rect x="9.5" y="15" width="4" height="4" fill="#3a4840"/><rect x="6" y="25" width="10" height="1" fill="#706860"/><linearGradient id="sky1" x1="0" y1="0" x2="0" y2="1"><stop offset="0" stop-color="#142c90"/><stop offset="0.7" stop-color="#3470d8"/><stop offset="1" stop-color="#5088e0"/></linearGradient><rect x="23.5" y="1" width="22" height="20" fill="url(#sky1)"/><rect x="23.5" y="20" width="22" height="9" fill="#100c08"/><path d="M23.5 21C30 18 38 18 45.5 21" fill="#1c2848"/><path d="M24 7L30 1.5" stroke="#e8d870" stroke-width="2.4"/><path d="M27 11C29 4 36 2 42 5" stroke="#e0cc60" stroke-width="1.8" fill="none"/><path d="M27 10L36 16L42 14" stroke="#d8c058" stroke-width="1.8" fill="none"/><circle cx="37" cy="9" r="2.4" fill="#e8e4d8"/><path d="M33 14L39 14L40 22L32 22Z" fill="#c88838"/><path d="M34 21L31 29M38 21L42 29" stroke="#d8a840" stroke-width="2.2"/><rect x="30" y="12" width="3" height="3" fill="#c0a040"/><rect x="40" y="3" width="4" height="1" fill="#d0d0d0"/><rect x="25" y="27" width="4" height="1" fill="#a0a0a0"/><rect x="4" y="31.5" width="14" height="1.1" fill="#c8c0c8"/><rect x="2" y="33.4" width="19" height="1.5" fill="#f0e8f0"/><rect x="6" y="35.5" width="12" height="1.1" fill="#d0c8d0"/><rect x="1" y="38" width="21" height="19" fill="#141e40"/><path d="M4 43L10 39L20 42L19 53L7 54Z" fill="#a83018"/><ellipse cx="11" cy="47" rx="4" ry="4" fill="#e8b030"/><path d="M13 40L20 43L17 48L14 44Z" fill="#d8d0c8"/><path d="M1 50L6 52L4 57L1 57Z" fill="#4870b0"/><rect x="14" y="52" width="5" height="2" fill="#d0c8c0"/><rect x="27" y="31.5" width="14" height="1.1" fill="#d0d0e0"/><rect x="25" y="33.4" width="19" height="1.5" fill="#f0f0f8"/><rect x="28" y="35.5" width="12" height="1.1" fill="#b8b8d0"/><rect x="23.5" y="38" width="22" height="15" fill="#0c1650"/><rect x="26" y="40" width="17" height="10" fill="#1c3488"/><path d="M27 49L36 42L43 41M30 45L40 50M35 40L39 46" stroke="#c8d4f0" stroke-width="1.5" fill="none"/><ellipse cx="34" cy="46" rx="3" ry="2" fill="#6070a8"/><rect x="29" y="54" width="11" height="1" fill="#a0a0b0"/><rect x="33" y="56" width="4" height="1" fill="#707080"/></g></svg>
<svg class="a" style="left:156px;top:183px" width="55" height="40" viewBox="0 0 55 40"><defs><filter id="bl2" x="-5%" y="-5%" width="110%" height="110%"><feGaussianBlur stdDeviation="0.55"/></filter></defs><rect width="55" height="40" fill="#181214"/><g filter="url(#bl2)"><rect x="0.5" y="1" width="13" height="24" fill="#e2d2cc"/><circle cx="7" cy="11" r="4.2" fill="none" stroke="#7a3c30" stroke-width="1.7"/><circle cx="7" cy="11" r="2" fill="#b89088"/><rect x="2" y="19" width="10" height="1.3" fill="#8a5a50"/><rect x="3" y="22" width="8" height="1.2" fill="#a07870"/><rect x="0.5" y="25.5" width="13" height="13" fill="#201410"/><ellipse cx="5" cy="32" rx="3" ry="4.5" fill="#b85a28"/><rect x="9" y="29" width="3" height="8" fill="#5a2c14"/><rect x="14" y="1" width="13" height="16" fill="#2e2422"/><rect x="16" y="2" width="9" height="1.8" fill="#c8c0b8"/><ellipse cx="19" cy="11" rx="3" ry="4" fill="#6a5a50"/><ellipse cx="23.5" cy="10" rx="2.2" ry="3.5" fill="#b8aca0"/><rect x="16" y="13" width="3" height="3" fill="#d0c8c0"/><rect x="14" y="17.5" width="13" height="4" fill="#e4e0dc"/><rect x="14" y="21.5" width="13" height="17" fill="#2a2824"/><rect x="16" y="23" width="9" height="14" fill="none" stroke="#7a7468" stroke-width="0.9"/><ellipse cx="20.5" cy="30" rx="2.5" ry="4" fill="#8a8478"/><rect x="14" y="37" width="13" height="1.5" fill="#a89050"/><rect x="27.5" y="1" width="13.5" height="6" fill="#ece8e0"/><rect x="30" y="3" width="8" height="1.2" fill="#605048"/><rect x="27.5" y="7" width="13.5" height="10" fill="#2e1e1a"/><ellipse cx="34" cy="12" rx="4" ry="3.5" fill="#5a3830"/><rect x="27.5" y="17.5" width="13.5" height="4" fill="#e8e4e0"/><rect x="27.5" y="21.5" width="13.5" height="17" fill="#1e1414"/><ellipse cx="34" cy="30" rx="4.5" ry="5" fill="#7a2418"/><ellipse cx="34" cy="30" rx="2" ry="2.5" fill="#c8a090"/><rect x="41.5" y="1" width="13" height="6" fill="#f2f0ec"/><rect x="44" y="4" width="8" height="1.2" fill="#504840"/><rect x="41.5" y="7" width="13" height="10" fill="#243020"/><ellipse cx="46" cy="12" rx="3" ry="2.5" fill="#a0a888"/><ellipse cx="51" cy="13" rx="2" ry="2" fill="#d0d4c0"/><rect x="41.5" y="17.5" width="13" height="9" fill="#ece8e4"/><rect x="43" y="20" width="9" height="1.2" fill="#a09890"/><rect x="44" y="23" width="7" height="1" fill="#c0b8b0"/><rect x="41.5" y="26.5" width="13" height="9.5" fill="#7a3816"/><ellipse cx="48" cy="31" rx="4" ry="3" fill="#d08840"/></g><rect width="55" height="0.9" fill="#2830a0"/><rect y="39.1" width="55" height="0.9" fill="#2830a0"/></svg>
<div class="a" style="left:650.5px;top:81px;width:9.5px;height:287px;background:#f9f8f3"></div>
<div class="sbb" style="left:651px;top:82px;width:9px;height:10px"></div>
<svg class="a" style="left:652px;top:84px" width="6" height="5"><path d="M0.6 3.9L3 1.3L5.4 3.9" stroke="#4d6185" stroke-width="1.6" fill="none"/></svg>
<div class="sbb" style="left:651px;top:114px;width:9px;height:19px"></div>
<div class="sbb" style="left:651px;top:358px;width:9px;height:9px"></div>
<svg class="a" style="left:652px;top:360px" width="6" height="5"><path d="M0.6 1.1L3 3.7L5.4 1.1" stroke="#4d6185" stroke-width="1.6" fill="none"/></svg>
<div class="a" style="left:155px;top:367px;width:506px;height:1px;background:#b4c2cc"></div>
<div class="t" style="left:155.7px;top:370.10px;">Word :</div>
<div class="a" style="left:178px;top:368px;width:163px;height:12.5px;background:#fff;border:1px solid #b0bccb"></div>
<div class="t" style="left:181.4px;top:369.60px;">collection</div>
<div class="a" style="left:344px;top:369px;width:81px;height:13px;border:1px solid #3d5c80;border-radius:2px;background:linear-gradient(#fff,#f4f4f0 55%,#e3e0d6)"></div>
<div class="t" style="left:344px;top:370.90px;width:81px;text-align:center">Add to <u>C</u>atch words</div>
<div class="a" style="left:428.5px;top:369px;width:80.5px;height:13px;border:1px solid #3d5c80;border-radius:2px;background:linear-gradient(#fff,#f4f4f0 55%,#e3e0d6)"></div>
<div class="t" style="left:428.5px;top:370.90px;width:80.5px;text-align:center">Add to <u>T</u>rash words</div>
<div class="a" style="left:513.5px;top:369px;width:48px;height:13px;border:1px solid #cdcabb;border-radius:2px;background:#f5f4ee"></div>
<div class="t" style="left:513.5px;top:370.90px;width:48px;text-align:center;color:#b3b0a0">Fin<u>d</u> word</div>
<div class="a" style="left:566.5px;top:371px;width:8px;height:8px;border:1px solid #1c5180;background:linear-gradient(135deg,#dcdcd4,#fafaf6)"></div>
<svg class="a" style="left:567.5px;top:372px" width="6" height="6"><path d="M0.6 2.8L2.3 4.6L5.4 1.2" stroke="#21a121" stroke-width="1.4" fill="none"/></svg>
<div class="t" style="left:577px;top:371.00px;"><u>A</u>utomatically find word</div>
<div class="a" style="left:155px;top:384.5px;width:507px;height:2px;background:linear-gradient(#8c8978,#736f60)"></div>
<div class="a" style="left:155px;top:386.5px;width:507px;height:1px;background:#f7f6f0"></div>
<div class="t" style="left:159.2px;top:390.50px;font-size:7px">Temporary Work Area -&nbsp;&nbsp; All results for :&nbsp;&nbsp; collection (3 results)</div>
<div class="a" style="left:155px;top:403px;width:505px;height:1px;background:#f6f8f4"></div>
<div class="a" style="left:155px;top:404px;width:505px;height:1px;background:#b9c1c3"></div>
<div class="a" style="left:155px;top:405px;width:505px;height:9px;background:linear-gradient(#ece8d9,#e9e4d2);border-bottom:1px solid #cdc8b4"></div>
<div class="t" style="left:156.8px;top:405.80px;">Picture</div>
<div class="a" style="left:211px;top:407px;width:1px;height:6px;background:#dcd7c6"></div>
<div class="t" style="left:213px;top:405.80px;">Auction title</div>
<div class="a" style="left:508px;top:407px;width:1px;height:6px;background:#dcd7c6"></div>
<div class="t" style="left:511.7px;top:405.80px;">View</div>
<div class="a" style="left:541px;top:407px;width:1px;height:6px;background:#dcd7c6"></div>
<div class="t" style="left:544.8px;top:405.80px;">Price (BuyItN...</div>
<div class="a" style="left:590px;top:407px;width:1px;height:6px;background:#dcd7c6"></div>
<div class="t" style="left:593px;top:405.80px;">Bids</div>
<div class="a" style="left:610.5px;top:407px;width:1px;height:6px;background:#dcd7c6"></div>
<div class="t" style="left:614px;top:405.80px;">Time left</div>
<div class="a" style="left:658px;top:407px;width:1px;height:6px;background:#dcd7c6"></div>
<div class="t" style="left:658px;top:405.80px;"></div>
<div class="a" style="left:155px;top:414px;width:505px;height:10px;background:#fff"></div>
<div class="a" style="left:211px;top:414px;width:449px;height:10px;background:#f7e7e7"></div>
<div class="a" style="left:508px;top:414px;width:1px;height:10px;background:#fff"></div>
<div class="a" style="left:541px;top:414px;width:1px;height:10px;background:#fff"></div>
<div class="a" style="left:590px;top:414px;width:1px;height:10px;background:#fff"></div>
<div class="a" style="left:610.5px;top:414px;width:1px;height:10px;background:#fff"></div>
<svg class="a" style="left:177px;top:414px" width="9" height="10" viewBox="0 0 9 10"><path d="M5.5 3.2L3.6 0.2M5.5 3.2L5.6 0M5.5 3.2L8.4 0.6" stroke="#c4bc60" stroke-width="0.9" fill="none"/><rect x="0" y="2.8" width="8" height="6" rx="0.5" fill="#23785a"/><rect x="4.5" y="2.8" width="3.5" height="6" fill="#206a78"/><rect x="0" y="7.8" width="8" height="1" fill="#184a44"/><circle cx="3.2" cy="5.4" r="1.15" fill="#b0f8f8"/></svg>
<div class="t" style="left:211.7px;top:414.60px;">Creature Collection (D&amp;D/D20)</div>
<div class="t" style="left:511.2px;top:414.60px;color:#3b3ba8;letter-spacing:0.35px">View</div>
<div class="t" style="left:543.9px;top:414.60px;">$12.50 ($24....</div>
<div class="t" style="left:592px;top:414.60px;">-</div>
<div class="t" style="left:612.8px;top:414.60px;">10h 43m</div>
<div class="a" style="left:155px;top:424px;width:505px;height:60px;background:#fff"></div>
<div class="a" style="left:211px;top:424px;width:449px;height:60px;background:#f7e7e7"></div>
<div class="a" style="left:508px;top:424px;width:1px;height:60px;background:#fff"></div>
<div class="a" style="left:541px;top:424px;width:1px;height:60px;background:#fff"></div>
<div class="a" style="left:590px;top:424px;width:1px;height:60px;background:#fff"></div>
<div class="a" style="left:610.5px;top:424px;width:1px;height:60px;background:#fff"></div>
<div class="t" style="left:211.7px;top:449.60px;"><span style="letter-spacing:-0.35px">EARTHDAWN HUGE COLLECTION</span></div>
<div class="t" style="left:511.2px;top:449.60px;color:#3b3ba8;letter-spacing:0.35px">View</div>
<div class="t" style="left:543.9px;top:449.60px;">$280.00</div>
<div class="t" style="left:592px;top:449.60px;">4</div>
<div class="t" style="left:612.8px;top:449.60px;">10h 10m</div>
<div class="a" style="left:155px;top:484px;width:505px;height:10px;background:#fff"></div>
<div class="a" style="left:211px;top:484px;width:449px;height:10px;background:#fff"></div>
<svg class="a" style="left:177px;top:484px" width="9" height="10" viewBox="0 0 9 10"><path d="M5.5 3.2L3.6 0.2M5.5 3.2L5.6 0M5.5 3.2L8.4 0.6" stroke="#c4bc60" stroke-width="0.9" fill="none"/><rect x="0" y="2.8" width="8" height="6" rx="0.5" fill="#23785a"/><rect x="4.5" y="2.8" width="3.5" height="6" fill="#206a78"/><rect x="0" y="7.8" width="8" height="1" fill="#184a44"/><circle cx="3.2" cy="5.4" r="1.15" fill="#b0f8f8"/></svg>
<div class="t" style="left:211.7px;top:484.60px;"><span style="letter-spacing:-0.4px">LARGE COLLECTION OF D&amp;D</span> Manuals/Books</div>
<div class="t" style="left:511.2px;top:484.60px;color:#3b3ba8;letter-spacing:0.35px">View</div>
<div class="t" style="left:543.9px;top:484.60px;">$20.50</div>
<div class="t" style="left:592px;top:484.60px;">5</div>
<div class="t" style="left:612.8px;top:484.60px;">&nbsp;1h 36m</div>
<svg class="a" style="left:156px;top:431px" width="56" height="44" viewBox="0 0 56 44"><defs><filter id="bl3" x="-5%" y="-5%" width="110%" height="110%"><feGaussianBlur stdDeviation="0.5"/></filter></defs><rect width="56" height="44" fill="#100604"/><g filter="url(#bl3)"><rect x="0" y="0" width="26" height="13" fill="#1e0c08"/><rect x="3" y="1" width="4" height="11" fill="#3a1810"/><rect x="10" y="2" width="6" height="8" fill="#2a120a"/><rect x="18" y="1" width="5" height="9" fill="#40201a"/><rect x="26" y="0" width="24" height="11" fill="#3e3020"/><rect x="28" y="1" width="6" height="8" fill="#a8a088"/><rect x="30" y="2" width="2" height="5" fill="#e8e4d8"/><rect x="36" y="2" width="4" height="6" fill="#6a5a40"/><rect x="41" y="1" width="7" height="8" fill="#8a7658"/><rect x="49" y="2" width="6" height="7" fill="#281a12"/><rect x="50" y="4" width="3" height="3" fill="#d8d8c8"/><ellipse cx="28" cy="36" rx="27.5" ry="7" fill="#3a1208"/><ellipse cx="28" cy="34.5" rx="25" ry="5" fill="#6a2810"/><path d="M3 36C14 41.5 42 41.5 53 36" stroke="#a85428" stroke-width="1" fill="none"/><path d="M6 39C18 43 38 43 50 39" stroke="#2a0c06" stroke-width="1.2" fill="none"/><path d="M3 20L10 12L20 13L28 10L38 12L46 11L54 17L54 29L44 33L28 34L12 33L2 29Z" fill="#4a2418"/><rect x="5" y="17" width="8" height="11" fill="#e4d4d8" transform="rotate(-18 9 22)"/><rect x="7" y="19" width="4" height="5" fill="#b04040" transform="rotate(-18 9 22)"/><rect x="14" y="13" width="7" height="7" fill="#a04a38"/><rect x="15" y="21" width="7" height="8" fill="#d8b060"/><rect x="22" y="14" width="7" height="7" fill="#9868b8"/><rect x="23" y="22" width="6" height="8" fill="#f0ece8"/><rect x="30" y="13" width="6" height="8" fill="#c8b8d8"/><rect x="29" y="22" width="7" height="7" fill="#c8a860"/><rect x="37" y="14" width="7" height="7" fill="#7050a0"/><rect x="37" y="22" width="6" height="7" fill="#e0e0e8"/><rect x="45" y="15" width="7" height="7" fill="#c07848" transform="rotate(14 48 18)"/><rect x="44" y="23" width="7" height="6" fill="#b05838"/><rect x="17" y="24" width="3" height="2" fill="#503020"/><rect x="25" y="25" width="3" height="2" fill="#805040"/><rect x="39" y="25" width="3" height="2" fill="#6060a0"/><rect x="10" y="28" width="6" height="2" fill="#7878a8"/></g></svg>
<div class="a" style="left:659.5px;top:405px;width:1px;height:89px;background:#c8c8c0"></div>
<div class="a" style="left:3px;top:518px;width:659px;height:1px;background:#f2eedc"></div>
<div class="a" style="left:0px;top:519px;width:665px;height:3px;background:linear-gradient(#0a46e0,#0532c0)"></div>
<div class="a" style="left:660px;top:55px;width:1px;height:463px;background:#c4c2b6"></div>
<div class="a" style="left:661px;top:55px;width:1px;height:463px;background:#f0efe6"></div></body></html>
